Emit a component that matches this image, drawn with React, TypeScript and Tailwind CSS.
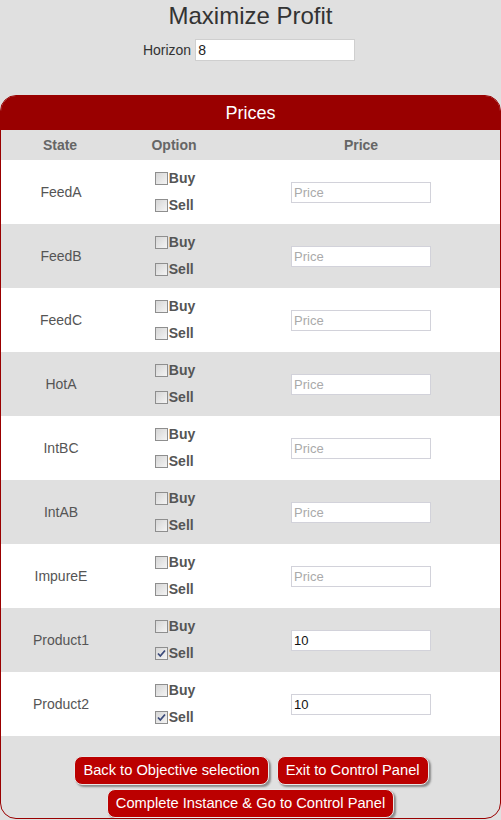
import React from 'react';

const rows = [
  { name: 'FeedA', sell: false, price: '' },
  { name: 'FeedB', sell: false, price: '' },
  { name: 'FeedC', sell: false, price: '' },
  { name: 'HotA', sell: false, price: '' },
  { name: 'IntBC', sell: false, price: '' },
  { name: 'IntAB', sell: false, price: '' },
  { name: 'ImpureE', sell: false, price: '' },
  { name: 'Product1', sell: true, price: '10' },
  { name: 'Product2', sell: true, price: '10' },
];

function Box({ checked }: { checked: boolean }) {
  return (
    <span className="relative inline-block h-[13px] w-[13px] border border-[#8e8e8e] bg-gradient-to-br from-[#d6d6d6] to-[#f4f4f4] mr-[1px]">
      {checked && (
        <svg viewBox="0 0 11 11" className="absolute left-0 top-0 h-[11px] w-[11px]">
          <path d="M2 5.5 L4.3 8 L9 2.5" fill="none" stroke="#3b4a7a" strokeWidth="1.8" />
        </svg>
      )}
    </span>
  );
}

function Btn({ label }: { label: string }) {
  return (
    <button className="h-[29px] rounded-[8px] border border-[#e8e8e8] bg-[#bb0000] px-[8px] text-[14.7px] text-white shadow-[2px_2px_2px_#8a8a8a]">
      {label}
    </button>
  );
}

export default function App() {
  return (
    <div className="min-h-[820px] bg-[#e0e0e0] font-['Liberation_Sans',Arial,sans-serif]">
      <h1 className="pt-[2px] text-center text-[24px] leading-[28px] text-[#333]">Maximize Profit</h1>
      <div className="mt-[9px] flex items-center justify-center gap-[4px] pr-[3px]">
        <span className="text-[14px] text-[#333]">Horizon</span>
        <input
          defaultValue="8"
          className="h-[22px] w-[160px] border border-[#cfcfcf] bg-white px-[2px] text-[14px] text-[#222] outline-none"
        />
      </div>

      <div className="mt-[34px] overflow-hidden rounded-[16px] border border-[#990000]">
        <div className="flex h-[34px] items-center justify-center bg-[#990000] text-[18px] text-white">Prices</div>
        <div className="grid h-[30px] grid-cols-[118px_110px_264px] items-center text-center text-[14px] font-bold text-[#666]">
          <span>State</span>
          <span>Option</span>
          <span>Price</span>
        </div>
        {rows.map((r, i) => (
          <div
            key={r.name}
            className={`grid h-[64px] grid-cols-[118px_110px_264px] items-center text-[14px] ${i % 2 === 0 ? 'bg-white' : 'bg-[#e0e0e0]'}`}
          >
            <span className="pl-[2px] text-center text-[#555]">{r.name}</span>
            <div className="flex justify-center">
              <div className="flex flex-col font-bold text-[#555] leading-[27px] pl-[2px]">
                <span className="flex items-center"><Box checked={false} />Buy</span>
                <span className="flex items-center"><Box checked={r.sell} />Sell</span>
              </div>
            </div>
            <div className="flex justify-center">
              <input
                placeholder="Price"
                defaultValue={r.price}
                className="h-[21px] w-[140px] border border-[#d2d2da] bg-white px-[2px] text-[13px] text-[#111] outline-none placeholder:text-[#aaa]"
              />
            </div>
          </div>
        ))}
        <div className="flex flex-col items-center gap-[4px] pt-[20px]">
          <div className="flex gap-[8px] pl-[2px]">
            <Btn label="Back to Objective selection" />
            <Btn label="Exit to Control Panel" />
          </div>
          <Btn label="Complete Instance & Go to Control Panel" />
        </div>
      </div>
    </div>
  );
}
